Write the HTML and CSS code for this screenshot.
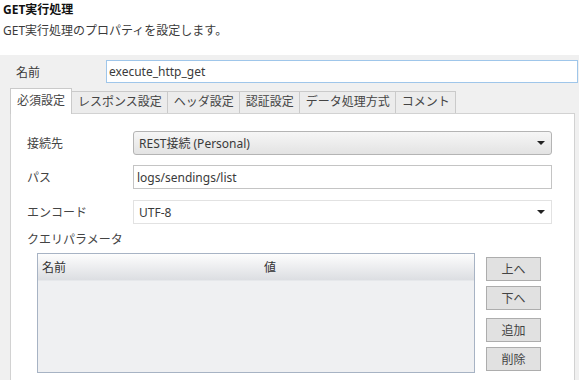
FILE: index.html
```html
<!DOCTYPE html>
<html lang="ja">
<head>
  <meta charset="UTF-8" />
  <title>GET実行処理</title>
  <link rel="stylesheet" href="styles.css">
</head>
<body>
  <div class="header">
    <div class="title">GET実行処理</div>
    <div class="subtitle">GET実行処理のプロパティを設定します。</div>
  </div>

  <div class="editor">
    <div class="name-row">
      <span class="name-label">名前</span>
      <div class="name-input">execute_http_get</div>
    </div>

    <div class="tabs">
      <div class="tab active">必須設定</div>
      <div class="tab">レスポンス設定</div>
      <div class="tab">ヘッダ設定</div>
      <div class="tab">認証設定</div>
      <div class="tab">データ処理方式</div>
      <div class="tab">コメント</div>
    </div>

    <div class="panel">
      <div class="form-row">
        <span class="label">接続先</span>
        <div class="field combo">
          <span>REST接続 (Personal)</span>
          <span class="arrow"></span>
        </div>
      </div>
      <div class="form-row">
        <span class="label">パス</span>
        <div class="field text">logs/sendings/list</div>
      </div>
      <div class="form-row">
        <span class="label">エンコード</span>
        <div class="field plain-combo">
          <span>UTF-8</span>
          <span class="arrow"></span>
        </div>
      </div>

      <div class="section-label">クエリパラメータ</div>
      <div class="params">
        <div class="param-table">
          <div class="param-head">
            <span class="col-name">名前</span>
            <span class="col-value">値</span>
          </div>
        </div>
        <div class="param-buttons">
          <button class="btn">上へ</button>
          <button class="btn">下へ</button>
          <button class="btn spaced">追加</button>
          <button class="btn">削除</button>
        </div>
      </div>
    </div>
  </div>
</body>
</html>
```

FILE: styles.css
```css
body {
  margin: 0;
  font-family: "Noto Sans", "Noto Sans CJK JP", sans-serif;
  font-size: 12px;
  color: #3a3a3a;
  background: #fff;
}

.header {
  height: 55px;
  box-sizing: border-box;
  padding: 2px 3px 0;
}

.title {
  font-size: 12px;
  font-weight: bold;
  line-height: 16px;
  color: #111;
}

.subtitle {
  margin-top: 5px;
  font-size: 12px;
  line-height: 16px;
  color: #3a3a3a;
}

.editor {
  background: #f0f0f0;
  padding-top: 5px;
  height: 325px;
  box-sizing: border-box;
  overflow: hidden;
}

.name-row {
  display: flex;
  align-items: center;
  height: 23px;
  padding-right: 1px;
}

.name-label {
  width: 90px;
  padding-left: 16px;
}

.name-input {
  flex: 1;
  height: 23px;
  box-sizing: border-box;
  border: 1px solid #9fc6ea;
  background: #fff;
  padding-left: 2px;
  line-height: 21px;
}

.tabs {
  display: flex;
  align-items: flex-end;
  margin: 5px 0 0 10px;
  height: 25px;
}

.tab {
  height: 22px;
  box-sizing: border-box;
  padding: 0 5px 0 6px;
  line-height: 20px;
  background: #ececec;
  border: 1px solid #cacaca;
  border-bottom: none;
  border-left: none;
  color: #444;
}

.tab.active {
  height: 26px;
  margin-bottom: -1px;
  padding: 0 6px;
  line-height: 24px;
  background: #fff;
  border-left: 1px solid #cacaca;
  position: relative;
}

.panel {
  margin: 0 4px 0 10px;
  background: #fff;
  border: 1px solid #d2d2d2;
  padding: 17px 22px 20px 16px;
}

.form-row {
  display: flex;
  align-items: center;
  height: 24px;
  margin-bottom: 10px;
}

.form-row:nth-child(2) {
  margin-bottom: 11px;
}

.label {
  width: 106px;
  flex-shrink: 0;
  color: #444;
}

.field {
  flex: 1;
  height: 24px;
  box-sizing: border-box;
  display: flex;
  align-items: center;
  justify-content: space-between;
  padding: 0 5px;
}

.combo {
  border: 1px solid #b4b4b4;
  border-radius: 3px;
  background: linear-gradient(#f6f6f6, #e3e3e3);
}

.text {
  border: 1px solid #c4c4c4;
  background: #fff;
  padding-left: 3px;
}

.plain-combo {
  border: 1px solid #e2e2e2;
  background: #fff;
}

.arrow {
  width: 0;
  height: 0;
  border-left: 4px solid transparent;
  border-right: 4px solid transparent;
  border-top: 4px solid #222;
  margin-right: 1px;
}

.section-label {
  line-height: 16px;
  margin-top: -2px;
  color: #444;
}

.params {
  display: flex;
  align-items: flex-start;
  gap: 11px;
  margin: 5px 0 0 10px;
}

.param-table {
  width: 438px;
  height: 120px;
  box-sizing: border-box;
  border: 1px solid #a7b3c4;
  background: #eff0f2;
}

.param-head {
  height: 26px;
  display: flex;
  align-items: center;
  background: linear-gradient(#fdfdfd, #dcdee2);
  border-bottom: 1px solid #e6e8eb;
  color: #333;
}

.col-name {
  width: 222px;
  padding-left: 4px;
}

.param-buttons {
  display: flex;
  flex-direction: column;
  gap: 5px;
  padding-top: 4px;
}

.btn {
  width: 55px;
  height: 24px;
  box-sizing: border-box;
  border: 1px solid #adadad;
  background: #e1e1e1;
  font-family: "Noto Sans", "Noto Sans CJK JP", sans-serif;
  font-size: 12px;
  color: #444;
  padding: 0;
}

.btn.spaced {
  margin-top: 3px;
}
```
